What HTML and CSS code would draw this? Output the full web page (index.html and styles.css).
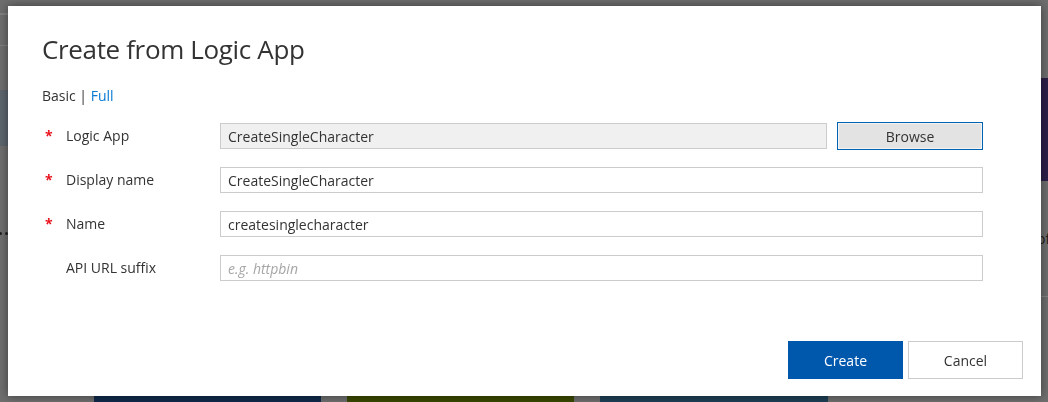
FILE: index.html
```html
<!DOCTYPE html>
<html lang="en">
<head>
<meta charset="utf-8">
<title>Create from Logic App</title>
<link rel="stylesheet" href="styles.css">
</head>
<body>
<div class="page">
  <div class="rail rail-left">
    <div class="rl-line rl-line1"></div>
    <div class="rl-line rl-line2"></div>
    <div class="rl-band"></div>
    <div class="rl-dots"><span class="dot"></span><span class="dot"></span></div>
  </div>
  <div class="center">
    <div class="tiles">
      <div class="tile tile-blue"></div>
      <div class="tile tile-green"></div>
      <div class="tile tile-teal"></div>
    </div>
  </div>
  <div class="rail rail-right">
    <div class="rr-band"></div>
    <div class="rr-text">of</div>
    <div class="rr-line"></div>
  </div>
</div>

<div class="dialog" role="dialog" aria-label="Create from Logic App">
  <h1 class="title">Create from Logic App</h1>
  <div class="mode">Basic | <a class="link" href="#">Full</a></div>
  <div class="form">
    <div class="row">
      <span class="req">*</span>
      <label class="label">Logic App</label>
      <div class="field field-browse">
        <input class="input input-disabled" type="text" value="CreateSingleCharacter" readonly>
        <button class="btn-browse" type="button">Browse</button>
      </div>
    </div>
    <div class="row">
      <span class="req">*</span>
      <label class="label">Display name</label>
      <div class="field">
        <input class="input" type="text" value="CreateSingleCharacter">
      </div>
    </div>
    <div class="row">
      <span class="req">*</span>
      <label class="label">Name</label>
      <div class="field">
        <input class="input" type="text" value="createsinglecharacter">
      </div>
    </div>
    <div class="row">
      <span class="req"></span>
      <label class="label">API URL suffix</label>
      <div class="field">
        <input class="input" type="text" placeholder="e.g. httpbin">
      </div>
    </div>
  </div>
  <div class="footer">
    <button class="btn btn-primary" type="button">Create</button>
    <button class="btn btn-default" type="button">Cancel</button>
  </div>
</div>
</body>
</html>
```
FILE: styles.css
```css
* { box-sizing: border-box; }
html, body {
  margin: 0;
  padding: 0;
  width: 1048px;
  height: 402px;
  overflow: hidden;
  background: #6e6e6e;
  font-family: "Open Sans", "Noto Sans", sans-serif;
}

/* ---------- dimmed background page ---------- */
.page {
  display: flex;
  height: 402px;
}
.rail {
  display: flex;
  flex-direction: column;
  overflow: hidden;
}
.rail-left { width: 8px; }
.rail-right { width: 7px; }
.center {
  flex: 1;
  display: flex;
  flex-direction: column;
  justify-content: flex-end;
}
.rl-line { background: #808080; }
.rl-line1 { margin-top: 13px; height: 2px; }
.rl-line2 { margin-top: 30px; height: 1px; }
.rl-band { margin-top: 44px; height: 56px; background: #5d656d; }
.rl-dots {
  margin-top: 86px;
  display: flex;
  gap: 3px;
  margin-left: -1px;
}
.dot { width: 3px; height: 3px; background: #1e1e1e; border-radius: 50%; }

.rr-band { margin-top: 78px; height: 103px; background: #2d1f48; }
.rr-text {
  margin-top: 48px;
  margin-left: -4px;
  font-size: 14px;
  line-height: 20px;
  color: #1c1c1c;
}
.rr-line { margin-top: 47px; height: 1px; background: #858585; }

.tiles {
  display: flex;
  gap: 26px;
  padding-left: 86px;
  height: 40px;
}
.tile { width: 227px; height: 40px; }
.tile-blue { background: #0f2a4a; }
.tile-green { background: #394800; }
.tile-teal { background: #1f3f55; width: 228px; }

/* ---------- dialog ---------- */
.dialog {
  position: fixed;
  left: 8px;
  top: 6px;
  width: 1033px;
  height: 390px;
  background: #fff;
  box-shadow: 0 0 9px rgba(0, 0, 0, 0.45);
  display: flex;
  flex-direction: column;
  padding: 25px 18px 17px 34px;
  color: #333;
}
.title {
  margin: 0;
  font-size: 26px;
  line-height: 36px;
  font-weight: 400;
  letter-spacing: -0.35px;
  color: #333;
}
.mode {
  margin-top: 19px;
  font-size: 14px;
  line-height: 20px;
  color: #333;
}
.link { color: #0a7bd2; text-decoration: none; }

.form {
  margin-top: 16px;
  margin-right: 40px;
  display: flex;
  flex-direction: column;
  gap: 16px;
}
.row {
  display: grid;
  grid-template-columns: 24px 154px 1fr;
  align-items: center;
  height: 28px;
  font-size: 14px;
  line-height: 20px;
}
.req {
  color: #e8111b;
  font-weight: 700;
  padding-left: 3px;
  align-self: center;
  line-height: 20px;
  height: 20px;
}
.label { color: #333; }
.field {
  display: flex;
  gap: 10px;
  align-items: center;
}
.input {
  flex: 1;
  min-width: 0;
  height: 26px;
  border: 1px solid #cccccc;
  background: #fff;
  padding: 0 7px;
  font-family: inherit;
  font-size: 14px;
  color: #333;
  outline: none;
  margin: 0;
}
.input::placeholder { color: #a6a6a6; font-style: italic; }
.input-disabled { background: #f0f0f0; }
.btn-browse {
  width: 146px;
  height: 28px;
  margin: 0;
  border: 1px solid #0063b1;
  box-shadow: inset 0 0 0 1px #f4f4f4;
  background: #e3e3e3;
  font-family: inherit;
  font-size: 14px;
  color: #333;
  padding: 0;
}

.footer {
  margin-top: auto;
  display: flex;
  justify-content: flex-end;
  gap: 5px;
}
.btn {
  width: 115px;
  height: 38px;
  margin: 0;
  font-family: inherit;
  font-size: 14px;
  padding: 0;
}
.btn-primary {
  background: #0058ad;
  border: 1px solid #0058ad;
  color: #fff;
}
.btn-default {
  background: #fff;
  border: 1px solid #cccccc;
  color: #333;
}
```
